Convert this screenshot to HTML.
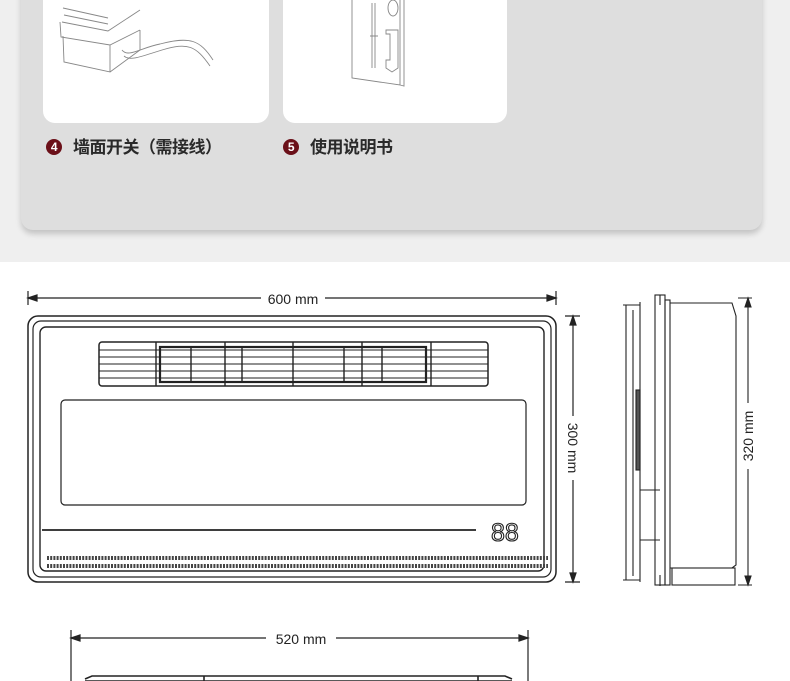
<!DOCTYPE html>
<html><head><meta charset="utf-8"><style>
body{margin:0;width:790px;height:681px;overflow:hidden;background:#fff;font-family:"Liberation Sans","Noto Sans CJK SC",sans-serif}
.top{position:absolute;left:0;top:0;width:790px;height:262px;background:#efefef}
.card{position:absolute;left:21px;top:-20px;width:741px;height:250px;background:#dedede;border-radius:0 0 12px 12px;box-shadow:0 4px 6px rgba(0,0,0,.18)}
.tile{position:absolute;top:-20px;height:143px;background:#fff;border-radius:0 0 12px 12px}
.lab{position:absolute;top:137px;font-size:17px;color:#2a2a2a;line-height:22px;font-weight:bold;letter-spacing:-0.5px}
.num{display:inline-block;width:16px;height:16px;border-radius:50%;background:#6b1019;color:#fff;font-size:12px;text-align:center;line-height:16px;vertical-align:2px;margin-right:11px;font-weight:bold}
svg{position:absolute;left:0;top:0}
</style></head><body>
<div class="top"><div class="card"></div>
<div class="tile" style="left:43px;width:226px"></div>
<div class="tile" style="left:283px;width:224px"></div>
<div class="lab" style="left:46px"><span class="num">4</span>墙面开关（需接线）</div>
<div class="lab" style="left:283px"><span class="num">5</span>使用说明书</div>
</div>
<svg width="790" height="681" viewBox="0 0 790 681" fill="none" stroke="#222" font-family="Liberation Sans, sans-serif">
<g stroke="#888" stroke-width="0.9">
<path d="M62 22 L108 31 L140 10 M60 22 L61 37 L110 45 L140 30 M63 36 L64 62 L110 72 L110 45 M110 72 L140 50 L140 30 M64 15 L108 24 M63 8 L108 18"/>
<path d="M122 50 C128 58 140 48 160 44 C190 36 200 40 213 60 M124 56 C130 62 145 55 162 50 C188 42 196 46 210 66"/>
<path d="M352 0 L352 78 L400 85 L400 0 M400 85 L404 86 L404 0"/>
<path d="M372 3 L372 68 M375 3 L375 68 M370 36 L378 36"/>
<ellipse cx="393" cy="8" rx="5" ry="8"/>
<path d="M386 30 L398 30 L398 68 L392 72 L386 68 L386 60 L390 60 L390 34 L386 34 Z"/>
</g>
<g stroke-width="1.2">
<path d="M28 298 L556 298" /><path d="M28 291 L28 305 M556 291 L556 305"/>
<path d="M28 298 l9 -3 v6z M556 298 l-9 -3 v6z" fill="#222"/>
<rect x="261" y="289" width="64" height="18" fill="#fff" stroke="none"/>
<text x="293" y="304" font-size="14" fill="#222" stroke="none" text-anchor="middle">600 mm</text>
<rect x="28" y="316" width="528" height="266" rx="10" stroke-width="1.5"/>
<rect x="33" y="321" width="518" height="256" rx="8"/>
<rect x="40" y="327" width="504" height="244" rx="6" stroke-width="1.4"/>
<rect x="99" y="342" width="389" height="44" rx="3" stroke-width="1.5"/>
<path d="M99 350 H488 M99 357 H488 M99 364 H488 M99 371 H488 M99 378 H488" stroke-width="0.9"/>
<rect x="160" y="347" width="266" height="35" stroke-width="2.2"/>
<path d="M156 342 V386 M191 347 V382 M225 342 V386 M242 347 V382 M293 342 V386 M344 347 V382 M362 342 V386 M382 347 V382 M431 342 V386" stroke-width="1.4"/>
<rect x="61" y="400" width="465" height="105" rx="4"/>
<path d="M42 530 H476" stroke-width="1.8"/>
<text x="491" y="541" font-size="25" fill="none" stroke="#222" stroke-width="1.1">88</text>
<path d="M47 558 H548 M47 566 H548" stroke-dasharray="2 1.2" stroke-width="4" stroke="#444"/>
<path d="M573 316 V582 M565 316 H580 M565 582 H580"/>
<path d="M573 316 l-3 9 h6z M573 582 l-3 -9 h6z" fill="#222"/>
<rect x="565" y="416" width="16" height="64" fill="#fff" stroke="none"/>
<text x="0" y="0" font-size="14" fill="#222" stroke="none" text-anchor="middle" transform="translate(568 448) rotate(90)">300 mm</text>
</g>
<g stroke-width="1.1">
<path d="M626 305 L626 580 M633 310 V576 M640 302 V582 M660 295 V305 M660 575 V586"/>
<path d="M623 305 H640 M623 580 H640" />
<rect x="655" y="295" width="10" height="290"/>
<rect x="665" y="300" width="5" height="285"/>
<path d="M670 303 H732 L736 316 V565 L732 568 H670"/>
<rect x="672" y="568" width="63" height="17"/>
<rect x="636" y="390" width="4" height="80" fill="#555"/>
<path d="M640 490 H660 M640 540 H660"/>
<path d="M738 298 H752 M738 585 H752 M748 298 V585"/>
<path d="M748 298 l-3 9 h6z M748 585 l-3 -9 h6z" fill="#222"/>
<rect x="740" y="403" width="16" height="66" fill="#fff" stroke="none"/>
<text x="0" y="0" font-size="14" fill="#222" stroke="none" text-anchor="middle" transform="translate(753 436) rotate(-90)">320 mm</text>
</g>
<g stroke-width="1.2">
<path d="M71 638 H528 M71 630 V681 M528 630 V681"/>
<path d="M71 638 l9 -3 v6z M528 638 l-9 -3 v6z" fill="#222"/>
<rect x="266" y="629" width="70" height="18" fill="#fff" stroke="none"/>
<text x="301" y="644" font-size="14" fill="#222" stroke="none" text-anchor="middle">520 mm</text>
<path d="M85 679 L92 676 H505 L512 679 M85 681 H512 M204 676 V681 M478 676 V681" stroke-width="1.6"/>
</g>
</svg>
</body></html>
